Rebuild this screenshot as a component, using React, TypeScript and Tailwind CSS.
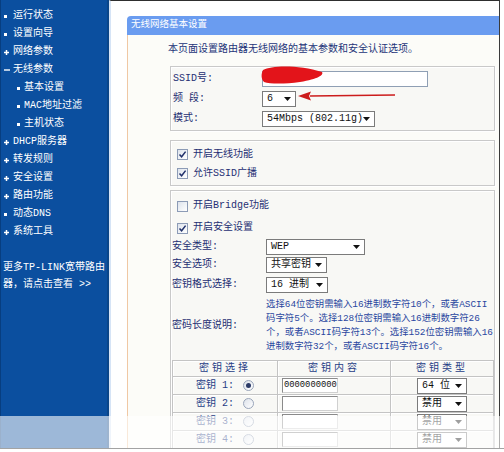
import React from 'react';

type NavItem = { kind: 'dot' | 'plus' | 'minus' | 'sub'; label: string };

const nav: NavItem[] = [
  { kind: 'dot', label: '运行状态' },
  { kind: 'dot', label: '设置向导' },
  { kind: 'plus', label: '网络参数' },
  { kind: 'minus', label: '无线参数' },
  { kind: 'sub', label: '基本设置' },
  { kind: 'sub', label: 'MAC地址过滤' },
  { kind: 'sub', label: '主机状态' },
  { kind: 'plus', label: 'DHCP服务器' },
  { kind: 'plus', label: '转发规则' },
  { kind: 'plus', label: '安全设置' },
  { kind: 'plus', label: '路由功能' },
  { kind: 'dot', label: '动态DNS' },
  { kind: 'plus', label: '系统工具' },
];

function Bullet({ kind }: { kind: NavItem['kind'] }) {
  if (kind === 'plus') {
    return (
      <svg width="5" height="5" viewBox="0 0 5 5" className="shrink-0">
        <path d="M0 2.5h5M2.5 0v5" stroke="#fff" strokeWidth="1.5" />
      </svg>
    );
  }
  if (kind === 'minus') {
    return (
      <svg width="6" height="6" viewBox="0 0 6 6" className="shrink-0">
        <path d="M0 3h6" stroke="#fff" strokeWidth="1.4" />
      </svg>
    );
  }
  return <span className="block w-[3px] h-[3px] bg-white shrink-0" />;
}

function Sidebar() {
  return (
    <div className="w-[109px] shrink-0 bg-[#0b4f9f] border-l border-l-[#073e80] border-r-2 border-r-[#0a4588] pt-[7px] text-white text-[10px] leading-none">
      {nav.map((item) => (
        <div
          key={item.label}
          className={`h-[18px] flex items-center ${item.kind === 'sub' ? 'pl-[16px]' : 'pl-[3px]'}`}
        >
          <span className={`flex items-center ${item.kind === 'sub' ? 'w-[7px]' : 'w-[9px]'}`}>
            <Bullet kind={item.kind} />
          </span>
          <span>{item.label}</span>
        </div>
      ))}
      <div className="mt-[18px] pl-[2px] leading-[17px]">
        <div className="whitespace-nowrap">更多TP-LINK宽带路由</div>
        <div className="whitespace-nowrap">器，请点击查看 &gt;&gt;</div>
      </div>
    </div>
  );
}

function Arrow() {
  return (
    <svg width="7" height="4" viewBox="0 0 7 4" className="shrink-0">
      <path d="M0 0h7L3.5 4z" fill="#111" />
    </svg>
  );
}

function Select({ value, w, className = '' }: { value: string; w: string; className?: string }) {
  return (
    <div
      className={`${w} h-[16px] flex items-center justify-between border border-[#7b7b7b] bg-white pl-[4px] pr-[4px] text-[#111] whitespace-nowrap ${className}`}
    >
      <span>{value}</span>
      <Arrow />
    </div>
  );
}

function Check({ on }: { on: boolean }) {
  return (
    <span className="w-[11px] h-[11px] shrink-0 border border-[#8c9bb6] bg-gradient-to-br from-[#dde3ec] to-white flex items-center justify-center">
      {on && (
        <svg width="9" height="9" viewBox="0 0 9 9">
          <path d="M1.5 4.5L3.6 6.8L7.6 1.6" fill="none" stroke="#1f2f6a" strokeWidth="1.5" />
        </svg>
      )}
    </span>
  );
}

function Radio({ on }: { on: boolean }) {
  return (
    <span className="w-[11px] h-[11px] rounded-full border border-[#9aa6ba] bg-gradient-to-br from-[#dde2ea] to-white flex items-center justify-center">
      {on && <span className="w-[5px] h-[5px] rounded-full bg-[#2b3a66]" />}
    </span>
  );
}

const boxCls =
  'border border-[#c9c9c9] bg-[#f8f8f5] shadow-[inset_1px_1px_0_#fff,1px_1px_0_#fff]';

const keys = [
  { n: 1, on: true, value: '0000000000', type: '64 位' },
  { n: 2, on: false, value: '', type: '禁用' },
  { n: 3, on: false, value: '', type: '禁用' },
  { n: 4, on: false, value: '', type: '禁用' },
];

const cell = 'border border-[#c4c4c4] shadow-[inset_1px_1px_0_#fff] p-0';

function KeyTable() {
  return (
    <table className="mt-[6px] ml-[1px] w-[321px] border-collapse text-[#273d86] table-fixed">
      <colgroup>
        <col className="w-[105px]" />
        <col className="w-[113px]" />
        <col className="w-[103px]" />
      </colgroup>
      <thead>
        <tr>
          <th className={`${cell} font-normal tracking-[3px]`}>
            <div className="h-[15px] flex items-center justify-center">密钥选择</div>
          </th>
          <th className={`${cell} font-normal tracking-[3px]`}>
            <div className="h-[15px] flex items-center justify-center">密钥内容</div>
          </th>
          <th className={`${cell} font-normal tracking-[3px]`}>
            <div className="h-[15px] flex items-center justify-center">密钥类型</div>
          </th>
        </tr>
      </thead>
      <tbody>
        {keys.map((k) => (
          <tr key={k.n}>
            <td className={cell}>
              <div className="h-[17px] flex items-center justify-center gap-[9px]">
                <span>密钥 {k.n}:</span>
                <Radio on={k.on} />
              </div>
            </td>
            <td className={cell}>
              <div className="h-[17px] flex items-center pl-[4px]">
                <div className="w-[56px] h-[15px] border border-[#8a8a8a] border-r-[#d0d0d0] border-b-[#d0d0d0] bg-white text-[8.8px] leading-[13px] pl-[1px] text-[#111] overflow-hidden whitespace-nowrap">
                  {k.value}
                </div>
              </div>
            </td>
            <td className={cell}>
              <div className="h-[17px] flex items-center justify-center">
                <Select value={k.type} w="w-[50px]" className="h-[15px]" />
              </div>
            </td>
          </tr>
        ))}
      </tbody>
    </table>
  );
}

function Panel() {
  return (
    <div className="ml-[16px] mt-[15px] flex flex-col h-full">
      <div className="h-[19px] shrink-0 rounded-tl-[4px] bg-[#6a9cf0] text-white text-[9.5px] flex items-center pl-[4px]">
        无线网络基本设置
      </div>
      <div className="flex-1 border-l border-l-[#f0c8a4] bg-[#fcfcf8] pl-[40px] pr-[4px] text-[#1f2f73] text-[10px] leading-none">
        <p className="pt-[10px] h-[22px] text-[#243478] whitespace-nowrap">
          本页面设置路由器无线网络的基本参数和安全认证选项。
        </p>

        {/* SSID / channel / mode */}
        <div className={`${boxCls} ml-[2px] mt-[9px] h-[65px] pt-[2px] pl-[2px]`}>
          <div className="h-[20px] flex items-center">
            <span className="w-[89px]">SSID号:</span>
            <div className="w-[166px] h-[16px] border border-[#8f9fb4] bg-white" />
          </div>
          <div className="h-[20px] flex items-center">
            <span className="w-[89px]">频 段:</span>
            <Select value="6" w="w-[34px]" />
          </div>
          <div className="h-[20px] flex items-center">
            <span className="w-[89px]">模式:</span>
            <Select value="54Mbps (802.11g)" w="w-[113px]" />
          </div>
        </div>

        {/* radio switches */}
        <div className={`${boxCls} ml-[2px] mt-[9px] h-[46px] pt-[4px] pl-[6px]`}>
          <div className="h-[19px] flex items-center gap-[5px]">
            <Check on />
            <span>开启无线功能</span>
          </div>
          <div className="h-[19px] flex items-center gap-[5px]">
            <Check on />
            <span>允许SSID广播</span>
          </div>
        </div>

        {/* security */}
        <div className={`${boxCls} ml-[2px] mt-[4px] pt-[3px] h-[300px]`}>
          <div className="h-[24px] flex items-center gap-[5px] pl-[6px]">
            <Check on={false} />
            <span>开启Bridge功能</span>
          </div>
          <div className="h-[20px] flex items-center gap-[5px] pl-[6px]">
            <Check on />
            <span>开启安全设置</span>
          </div>
          <div className="h-[17px] flex items-center pl-[1px]">
            <span className="w-[94px]">安全类型:</span>
            <Select value="WEP" w="w-[99px]" />
          </div>
          <div className="h-[20px] flex items-center pl-[1px]">
            <span className="w-[94px]">安全选项:</span>
            <Select value="共享密钥" w="w-[61px]" />
          </div>
          <div className="h-[19px] flex items-center pl-[1px]">
            <span className="w-[94px]">密钥格式选择:</span>
            <Select value="16 进制" w="w-[62px]" />
          </div>
          <div className="mt-[4px] flex items-center pl-[1px]">
            <span className="w-[94px] shrink-0">密码长度说明:</span>
            <div className="text-[#2a47a0] leading-[14px] text-[9.4px] whitespace-nowrap">
              <div>选择64位密钥需输入16进制数字符10个，或者ASCII</div>
              <div>码字符5个。选择128位密钥需输入16进制数字符26</div>
              <div>个，或者ASCII码字符13个。选择152位密钥需输入16</div>
              <div>进制数字符32个，或者ASCII码字符16个。</div>
            </div>
          </div>
          <KeyTable />
        </div>
      </div>
    </div>
  );
}

export default function App() {
  return (
    <div className="relative w-[504px] h-[452px] overflow-hidden bg-white flex font-['Liberation_Mono','Noto_Sans_CJK_SC',monospace]">
      <Sidebar />
      <div className="w-[391px] shrink-0 border-t border-t-[#2e2e2e] border-r border-r-[#3a3a3a] border-l-2 border-l-[#d6e4f6] overflow-hidden">
        <Panel />
      </div>

      {/* red marks over the SSID field and the channel select */}
      <svg className="absolute left-0 top-0 pointer-events-none" width="504" height="452">
        <path
          d="M263 70 C272 65 300 65 322 72 C324 75 318 79 300 82 C285 84 270 84 264 82 C261 79 261 74 263 70 Z"
          fill="#e3141a"
        />
        <path d="M310 96 L395 95" stroke="#cc1c1c" strokeWidth="1.6" />
        <path d="M298 96 L311 91.5 L309 96 L311 100.5 Z" fill="#cc1c1c" />
      </svg>

      {/* washed-out strip at the bottom */}
      <div className="absolute left-0 right-0 top-[416px] h-[32px] bg-white/60" />
      <div className="absolute left-0 right-0 top-[448px] h-[4px] bg-white border-t border-t-[#a3a3a3]" />
    </div>
  );
}
